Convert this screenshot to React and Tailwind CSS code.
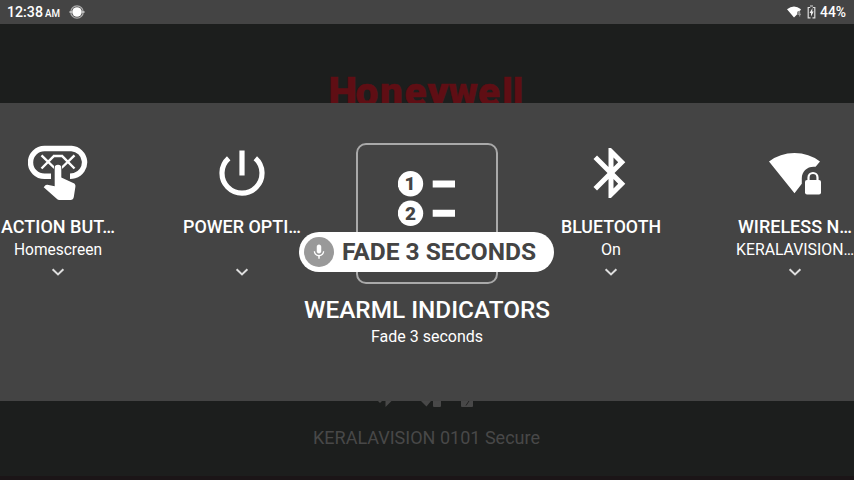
import React from "react";

const svgText = { fontFamily: "Roboto, sans-serif" };

function Label({ width, size, weight = 500, children, height, className = "", fill = "currentColor" }) {
  return (
    <svg width={width} height={height} className={"block shrink-0 overflow-visible " + className}>
      <text x="0" y={height * 0.8} textLength={width} lengthAdjust="spacingAndGlyphs" fontSize={size} fontWeight={weight} fill={fill} style={svgText}>
        {children}
      </text>
    </svg>
  );
}

function Chevron() {
  return (
    <svg width="14" height="10" viewBox="0 0 14 10" className="block">
      <path d="M1.600 2.200 7 7.400l5.400-5.200" fill="none" stroke="#dedede" strokeWidth="2" />
    </svg>
  );
}

function ActionIcon() {
  return (
    <svg width="60" height="56" viewBox="28 145 60 56" className="block">
      <path d="M51 176.300H44.500a14 13.900 0 0 1 0-27.800H71.500a14 13.900 0 0 1 3 27.200q-2 .6-4.500.6" fill="none" stroke="#fff" strokeWidth="5.400" />
      <path d="M41.500 155.300 54.500 168M54.500 155.300 41.500 168.500M61.500 155.300 74.500 168.500M74.500 155.300 61.500 168M53.500 156h8.500" fill="none" stroke="#fff" strokeWidth="2.400" />
      <path d="M54.700 168a3.300 3.300 0 0 1 6.600 0v9.500l11.900 5.400q2.600 1 2.200 3.800l-1.600 10.300q-.5 3-3.300 3H59.500q-1.600 0-2.800-1.200L43.700 187.300l1.700-2q.8-.8 2-.6l7.300 1.600z" fill="#fff" stroke="#444" strokeWidth="1.600" paintOrder="stroke" />
    </svg>
  );
}

function PowerIcon() {
  return (
    <svg width="48" height="48" viewBox="218 149 48 48" className="block">
      <path d="M242 150.500v25" stroke="#fff" strokeWidth="5.200" />
      <path d="M228.700 158.200a20 20 0 1 0 26.600 0" fill="none" stroke="#fff" strokeWidth="5.200" />
    </svg>
  );
}

function BluetoothIcon() {
  return (
    <svg width="60" height="60" viewBox="0 0 24 24" className="block">
      <path fill="#fff" d="M17.710 7.710 12 2h-1v7.590L6.410 5 5 6.410 10.590 12 5 17.590 6.410 19 11 14.410V22h1l5.710-5.710-4.300-4.290 4.300-4.290zM13 5.830l1.880 1.880L13 9.590V5.830zm1.880 10.460L13 18.170v-3.760l1.880 1.880z" />
    </svg>
  );
}

function WifiLockIcon() {
  return (
    <svg width="54" height="44" viewBox="768 151 54 44" className="block">
      <path d="M769 161.500Q780 153 794.500 153T820 161.500l-4.400 5.300c-7.800-1-13.800 4.200-13.800 11.500v5.500l-7.300 9.500z" fill="#fff" />
      <rect x="805" y="180" width="16" height="14.500" rx="2" fill="#fff" />
      <path d="M808.500 181v-3.500a4.500 4.500 0 0 1 9 0v3.500" fill="none" stroke="#fff" strokeWidth="2.200" />
    </svg>
  );
}

function ListIcon() {
  return (
    <svg width="58" height="56" viewBox="398 170 58 56" className="block" style={svgText}>
      <circle cx="410.500" cy="183.800" r="12.700" fill="#fff" />
      <circle cx="410.500" cy="213.200" r="12.700" fill="#fff" />
      <text x="410" y="190.400" textAnchor="middle" fontSize="19" fontWeight="900" fill="#444">1</text>
      <text x="410.500" y="219.800" textAnchor="middle" fontSize="19" fontWeight="900" fill="#444">2</text>
      <path d="M432.700 184H455M432.700 213.200H455" stroke="#fff" strokeWidth="7" />
    </svg>
  );
}

function MenuItem({ icon, title, titleWidth, sub, subWidth }) {
  return (
    <div className="flex w-[184px] shrink-0 flex-col items-center pt-[40px]">
      <div className="flex h-[60px] items-center justify-center">{icon}</div>
      <div className="mt-[13px] flex h-[22px] justify-center">
        <Label width={titleWidth} size={18} height={21}>{title}</Label>
      </div>
      <div className="flex h-[27px] justify-center pt-[1px]">
        {sub && <Label width={subWidth} size={16} weight={400} height={20}>{sub}</Label>}
      </div>
      <div className="pt-[2px]"><Chevron /></div>
    </div>
  );
}

function StatusBar() {
  return (
    <header className="flex h-6 items-center bg-[#444444] text-white">
      <div className="flex h-6 items-center pl-[7px]">
        <Label width={36} size={14} height={15}>12:38</Label>
        <Label width={15} size={10} height={15} className="ml-[2px]">AM</Label>
        <svg width="16" height="16" viewBox="0 0 16 16" className="ml-[9px] block">
          <circle cx="8" cy="8" r="4.800" fill="#fff" />
          <circle cx="8" cy="8" r="6.200" fill="none" stroke="#aaa" strokeWidth="1.300" />
          <path d="M.5 8h3M12.500 8h3" stroke="#bbb" strokeWidth="2" />
        </svg>
      </div>
      <div className="ml-auto flex h-6 items-center pr-[8px]">
        <svg width="15" height="12" viewBox="0 0 15 12" className="block">
          <path d="M0 3.200Q7-2 14 3.200l-1.400 2-2 .2-.6 3.200L7 11.500z" fill="#fff" />
          <path d="M13 4.500 10.600 8.300H14M12.700 6v4.500" fill="none" stroke="#aaa" strokeWidth=".9" />
        </svg>
        <svg width="9" height="14" viewBox="0 0 9 14" className="ml-[5px] mr-[1px] block">
          <path d="M3 1h3M3.500 12.800H1.200V2.500h2M5.500 12.800h2.300V2.500h-2" fill="none" stroke="#ddd" strokeWidth="1.200" />
          <path d="M5.500 3 2.500 8H4v3.500L6.700 6.500H5.200z" fill="#eee" />
        </svg>
        <Label width={26} size={14} height={15} className="ml-[3px]">44%</Label>
      </div>
    </header>
  );
}

export default function App() {
  return (
    <div className="flex h-[480px] w-[854px] flex-col overflow-hidden bg-[#1c1e1d] font-[Roboto,sans-serif] text-white">
      <StatusBar />
      <div className="flex h-[79px] justify-center overflow-hidden pt-[46px]">
        <svg width="194" height="40" className="block shrink-0 overflow-visible" fill="#5f0e14" stroke="#5f0e14" strokeWidth=".5" style={svgText}>
          <text x="-1.500 25.500 50 74.500 97.500 118.500 148 172.300 182.800" y="36" fontSize="40.500" fontWeight="900">
            Honeywe<tspan fontSize="38">ll</tspan>
          </text>
        </svg>
      </div>

      <main className="h-[298px] shrink-0 overflow-hidden bg-[#444444]">
        <div className="-ml-[34px] flex h-full w-[921px]">
          <MenuItem icon={<ActionIcon />} title="ACTION BUT…" titleWidth={114} sub="Homescreen" subWidth={88} />
          <MenuItem icon={<PowerIcon />} title="POWER OPTI…" titleWidth={118} />
          <section className="relative flex w-[185px] shrink-0 flex-col items-center pt-[40px]">
            <div className="ml-[1px] flex h-[141px] w-[142px] justify-center rounded-[10px] border-2 border-[#a9a9a9] pt-[25px]">
              <ListIcon />
            </div>
            <div className="absolute -left-[35px] top-[129px] flex h-10 w-[255px] items-center rounded-full bg-white pl-[5px] text-[#444444]">
              <div className="flex h-[30px] w-[30px] items-center justify-center rounded-full bg-[#999999]">
                <svg width="18" height="18" viewBox="0 0 24 24" className="block">
                  <path fill="#fff" d="M12 14c1.660 0 2.990-1.340 2.990-3L15 5c0-1.660-1.340-3-3-3S9 3.340 9 5v6c0 1.660 1.340 3 3 3zm5.300-3c0 3-2.540 5.100-5.300 5.100S6.700 14 6.700 11H5c0 3.410 2.720 6.230 6 6.720V21h2v-3.280c3.280-.48 6-3.300 6-6.720h-1.700z" />
                </svg>
              </div>
              <Label width={194} size={24} height={28} weight={700} className="ml-[8px]">FADE 3 SECONDS</Label>
            </div>
            <div className="ml-[1px] mt-[12px] flex h-[30px] justify-center">
              <Label width={246} size={24} height={28}>WEARML INDICATORS</Label>
            </div>
            <div className="ml-[1px] flex h-[20px] justify-center">
              <Label width={112} size={16} weight={400} height={20}>Fade 3 seconds</Label>
            </div>
          </section>
          <MenuItem icon={<BluetoothIcon />} title="BLUETOOTH" titleWidth={100} sub="On" subWidth={20} />
          <MenuItem icon={<WifiLockIcon />} title="WIRELESS N…" titleWidth={114} sub="KERALAVISION…" subWidth={118} />
        </div>
      </main>

      <footer className="flex h-[75px] shrink-0 flex-col items-center">
        <svg width="100" height="8" viewBox="376 401 100 8" className="mr-[2px] block">
          <g fill="#484848">
            <path d="m378 401 2 2 2-2zM385.500 401v6l6-6z" />
            <path d="m421 401 5.500 5.500 4.500-5.500zM433 401h8v5q0 1-1 1h-6q-1 0-1-1z" />
            <path d="M461 401h12v5q0 1-1 1h-10q-1 0-1-1z" />
          </g>
          <path d="M466 405.500 469 401" stroke="#222" />
        </svg>
        <Label width={227} size={18} height={22} weight={400} className="mr-[2px] mt-[17px]" fill="#484848">KERALAVISION 0101 Secure</Label>
      </footer>
      <div className="h-1 shrink-0 bg-[#1b1517]" />
    </div>
  );
}
